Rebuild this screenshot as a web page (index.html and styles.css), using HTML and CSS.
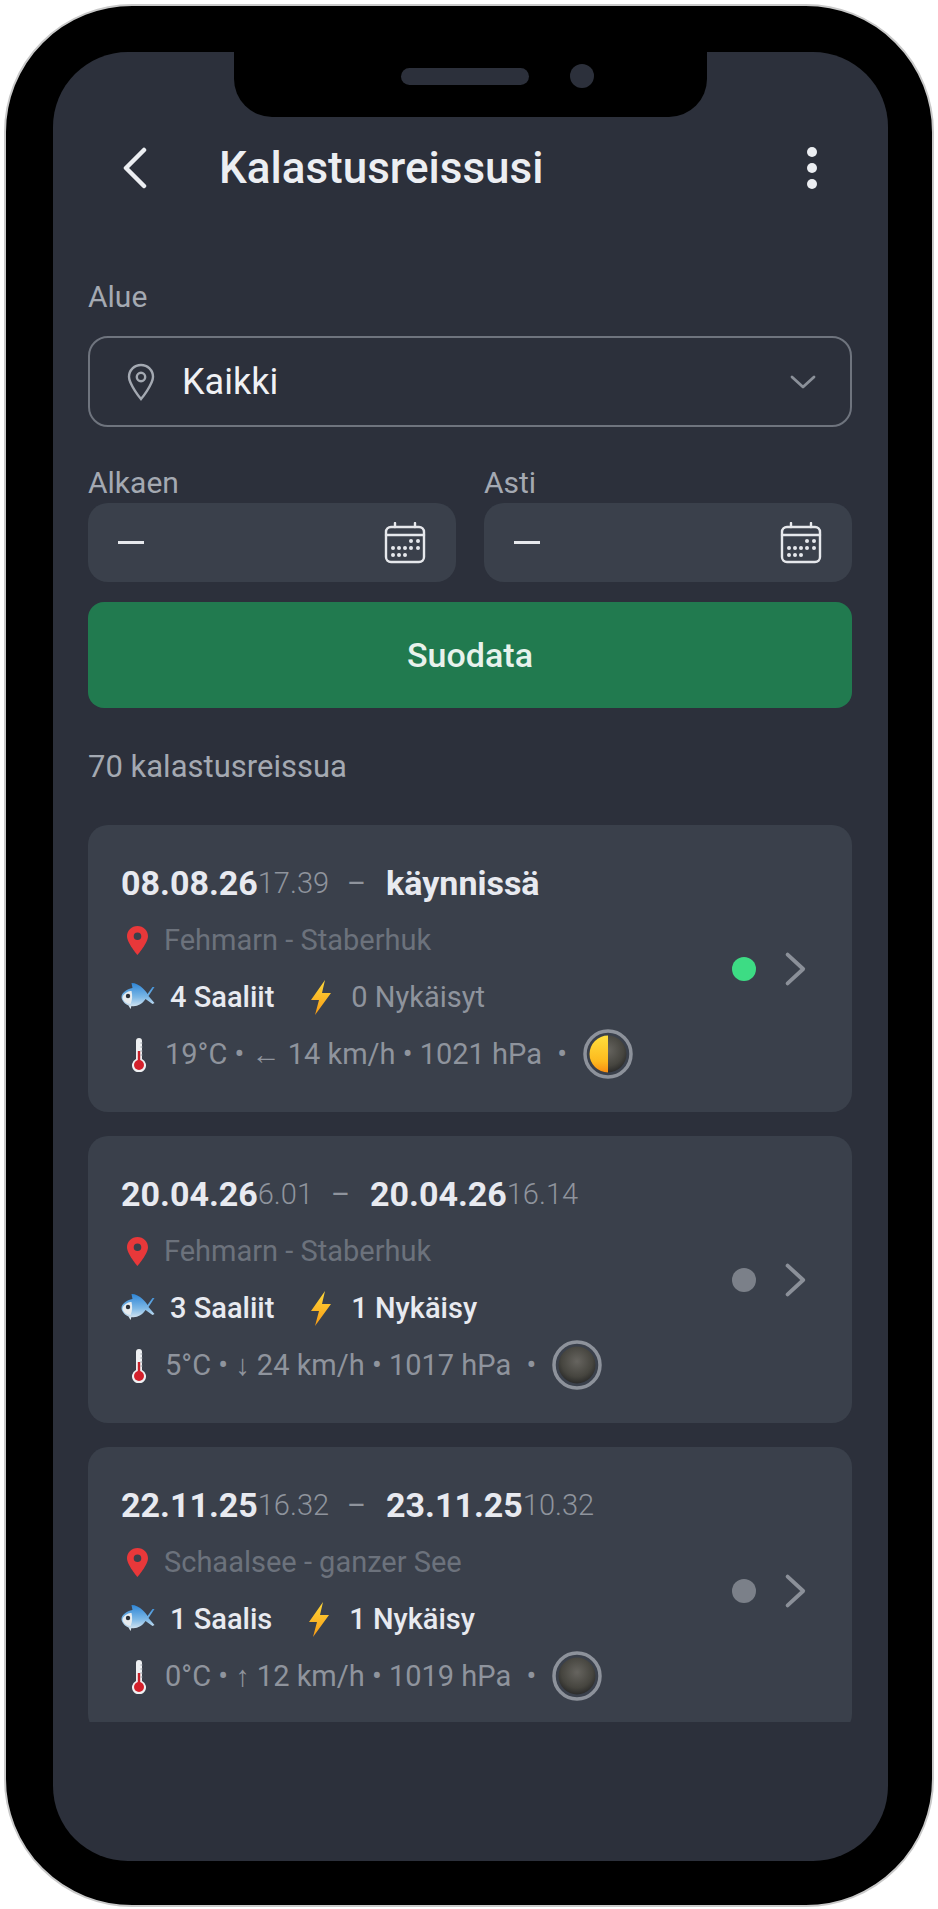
FILE: index.html
```html
<!DOCTYPE html>
<html lang="fi">
<head>
<meta charset="UTF-8">
<meta name="viewport" content="width=device-width, initial-scale=1.0">
<title>Kalastusreissusi</title>
<link rel="stylesheet" href="styles.css">
</head>
<body>

<svg class="icon-defs" aria-hidden="true">
    <defs>
        <linearGradient id="fishBody" x1="0" y1="0" x2="0" y2="1">
            <stop offset="0" stop-color="#2f86d6"/>
            <stop offset="0.55" stop-color="#7db8e6"/>
            <stop offset="1" stop-color="#e8eef2"/>
        </linearGradient>
        <linearGradient id="boltFill" x1="0" y1="0" x2="0" y2="1">
            <stop offset="0" stop-color="#ffd93b"/>
            <stop offset="1" stop-color="#f79a14"/>
        </linearGradient>
        <linearGradient id="moonLit" x1="0" y1="0" x2="0" y2="1">
            <stop offset="0" stop-color="#ffdf3d"/>
            <stop offset="0.7" stop-color="#fdb91e"/>
            <stop offset="1" stop-color="#f78d12"/>
        </linearGradient>
        <radialGradient id="moonDark" cx="0.5" cy="0.4" r="0.6">
            <stop offset="0" stop-color="#66645f"/>
            <stop offset="0.7" stop-color="#46453f"/>
            <stop offset="1" stop-color="#2b2b2a"/>
        </radialGradient>
        <symbol id="i-fish" viewBox="0 0 36 30">
            <path d="M33 5l-6 9 6 7-2 1-7-5c-3 5-9 8-14 7l-1 3-2-3.500C3 22 0 18 0 15c0-4 5-8 11-9l-1-5c4 0 8 2 11 5 2 2 4 4 5 6l5-7z" fill="url(#fishBody)"/>
            <path d="M1 15c2-5 7-6 9-6 1 4 1 9-1 13-4 0-8-3-8-7z" fill="#e6ebee"/>
            <circle cx="6.500" cy="14" r="2.200" fill="#2a3038"/>
        </symbol>
        <symbol id="i-bolt" viewBox="0 0 20 35">
            <path d="M14 0L0 20h8L4 35l16-22h-9z" fill="url(#boltFill)"/>
        </symbol>
        <symbol id="i-thermo" viewBox="0 0 14 35">
            <path d="M4 4a3 3 0 0 1 6 0v18a7 7 0 1 1-6 0z" fill="#eef0f2"/>
            <rect x="5.800" y="14" width="2.400" height="12" fill="#c9202a"/>
            <circle cx="7" cy="28" r="5" fill="#d3202b"/>
            <path d="M8.500 6h2M8.500 10h2M8.500 14h2M8.500 18h2" stroke="#9aa0a8" stroke-width="1"/>
        </symbol>
        <symbol id="i-pin-red" viewBox="0 0 21 29">
            <path fill-rule="evenodd" d="M10.500 0C4.700 0 0 4.600 0 10.300 0 17 10.500 29 10.500 29S21 17 21 10.300C21 4.600 16.300 0 10.500 0zm0 14a3.800 3.800 0 1 1 0-7.600 3.800 3.800 0 0 1 0 7.600z" fill="#e8383a"/>
        </symbol>
        <symbol id="i-chev" viewBox="0 0 20 30">
            <path d="M3 3l13 12L3 27" fill="none" stroke="#8b9099" stroke-width="3.200" stroke-linecap="round" stroke-linejoin="round"/>
        </symbol>
        <symbol id="i-cal" viewBox="0 0 42 42">
            <g fill="none" stroke="#e6e8ec" stroke-width="2.400" stroke-linecap="round">
                <rect x="2" y="5" width="38" height="35" rx="5"/>
                <path d="M2 13h38M11 1v4M31 1v4"/>
            </g>
            <g fill="#e6e8ec">
                <circle cx="27" cy="19" r="2"/><circle cx="34" cy="19" r="2"/>
                <circle cx="9" cy="26" r="2"/><circle cx="15" cy="26" r="2"/><circle cx="21" cy="26" r="2"/><circle cx="27" cy="26" r="2"/><circle cx="34" cy="26" r="2"/>
                <circle cx="9" cy="33" r="2"/><circle cx="15" cy="33" r="2"/><circle cx="21" cy="33" r="2"/>
            </g>
        </symbol>
        <symbol id="i-moon-half" viewBox="0 0 50 50">
            <circle cx="25" cy="25" r="23" fill="none" stroke="#8d929b" stroke-width="3.500"/>
            <circle cx="25" cy="25" r="18.500" fill="url(#moonDark)"/>
            <path d="M25 6.500a18.500 18.500 0 0 0 0 37z" fill="url(#moonLit)"/>
        </symbol>
        <symbol id="i-moon-new" viewBox="0 0 50 50">
            <circle cx="25" cy="25" r="23" fill="none" stroke="#8d929b" stroke-width="3.500"/>
            <circle cx="25" cy="25" r="18.500" fill="url(#moonDark)"/>
        </symbol>
    </defs>
</svg>

<div class="phone">
    <div class="notch">
        <span class="speaker"></span>
        <span class="camera"></span>
    </div>
    <div class="screen">
        <header class="topbar">
            <svg class="back" viewBox="0 0 26 42"><path d="M22 3L4 21l18 18" fill="none" stroke="#eceef2" stroke-width="4.500" stroke-linecap="round" stroke-linejoin="round"/></svg>
            <h1>Kalastusreissusi</h1>
            <div class="menu"><span></span><span></span><span></span></div>
        </header>

        <div class="filters">
            <div class="label">Alue</div>
            <div class="select">
                <svg class="select-pin" viewBox="0 0 28 38"><path d="M14 2C7.400 2 2 7.200 2 13.800 2 21.500 14 36 14 36s12-14.500 12-22.200C26 7.200 20.600 2 14 2z" fill="none" stroke="#a4a9b2" stroke-width="2.400"/><circle cx="14" cy="14" r="4.200" fill="none" stroke="#a4a9b2" stroke-width="2.400"/></svg>
                <span class="select-text">Kaikki</span>
                <svg class="select-chev" viewBox="0 0 26 14"><path d="M2 2l11 10L24 2" fill="none" stroke="#8b9099" stroke-width="2.800" stroke-linecap="round" stroke-linejoin="round"/></svg>
            </div>
            <div class="dates">
                <div class="date-col">
                    <div class="label">Alkaen</div>
                    <div class="date-field">
                        <span class="dash"></span>
                        <svg class="cal"><use href="#i-cal"/></svg>
                    </div>
                </div>
                <div class="date-col">
                    <div class="label">Asti</div>
                    <div class="date-field">
                        <span class="dash"></span>
                        <svg class="cal"><use href="#i-cal"/></svg>
                    </div>
                </div>
            </div>
            <button class="filter-btn" type="button">Suodata</button>
        </div>

        <div class="count">70 kalastusreissua</div>

        <div class="trips">
            <div class="card">
                <div class="card-body">
                    <div class="line when"><b>08.08.26</b> <span class="time">17.39</span><span class="sep">–</span><b>käynnissä</b></div>
                    <div class="line place"><svg class="pin"><use href="#i-pin-red"/></svg>Fehmarn - Staberhuk</div>
                    <div class="line stats">
                        <svg class="fish"><use href="#i-fish"/></svg><span class="on">4 Saaliit</span>
                        <svg class="bolt"><use href="#i-bolt"/></svg><span>0 Nykäisyt</span>
                    </div>
                    <div class="line weather">
                        <svg class="thermo"><use href="#i-thermo"/></svg>19°C • ← 14 km/h • 1021 hPa <span class="dot-sep">•</span>
                        <svg class="moon"><use href="#i-moon-half"/></svg>
                    </div>
                </div>
                <span class="status live"></span>
                <svg class="card-chev"><use href="#i-chev"/></svg>
            </div>

            <div class="card">
                <div class="card-body">
                    <div class="line when"><b>20.04.26</b> <span class="time">6.01</span><span class="sep">–</span><b>20.04.26</b> <span class="time">16.14</span></div>
                    <div class="line place"><svg class="pin"><use href="#i-pin-red"/></svg>Fehmarn - Staberhuk</div>
                    <div class="line stats">
                        <svg class="fish"><use href="#i-fish"/></svg><span class="on">3 Saaliit</span>
                        <svg class="bolt"><use href="#i-bolt"/></svg><span class="on">1 Nykäisy</span>
                    </div>
                    <div class="line weather">
                        <svg class="thermo"><use href="#i-thermo"/></svg>5°C • ↓ 24 km/h • 1017 hPa <span class="dot-sep">•</span>
                        <svg class="moon"><use href="#i-moon-new"/></svg>
                    </div>
                </div>
                <span class="status"></span>
                <svg class="card-chev"><use href="#i-chev"/></svg>
            </div>

            <div class="card">
                <div class="card-body">
                    <div class="line when"><b>22.11.25</b> <span class="time">16.32</span><span class="sep">–</span><b>23.11.25</b> <span class="time">10.32</span></div>
                    <div class="line place"><svg class="pin"><use href="#i-pin-red"/></svg>Schaalsee - ganzer See</div>
                    <div class="line stats">
                        <svg class="fish"><use href="#i-fish"/></svg><span class="on">1 Saalis</span>
                        <svg class="bolt"><use href="#i-bolt"/></svg><span class="on">1 Nykäisy</span>
                    </div>
                    <div class="line weather">
                        <svg class="thermo"><use href="#i-thermo"/></svg>0°C • ↑ 12 km/h • 1019 hPa <span class="dot-sep">•</span>
                        <svg class="moon"><use href="#i-moon-new"/></svg>
                    </div>
                </div>
                <span class="status"></span>
                <svg class="card-chev"><use href="#i-chev"/></svg>
            </div>
        </div>
    </div>
</div>

</body>
</html>
```

FILE: styles.css
```css
body {
    font-family: Roboto, "Liberation Sans", sans-serif;
    margin: 0;
    padding: 0;
    background-color: #fff;
}
.icon-defs {
    position: absolute;
    width: 0;
    height: 0;
}
.phone {
    position: relative;
    box-sizing: border-box;
    width: 930px;
    height: 1903px;
    margin: 4px 0 0 4px;
    padding: 46px 44px 44px 47px;
    background-color: #000;
    border: 2px solid #c9c9c9;
    border-radius: 128px;
}
.notch {
    position: absolute;
    top: 46px;
    left: 228px;
    width: 473px;
    height: 65px;
    background-color: #000;
    border-radius: 0 0 38px 38px;
}
.speaker {
    position: absolute;
    top: 16px;
    left: 167px;
    width: 128px;
    height: 17px;
    background-color: #2c303b;
    border-radius: 9px;
}
.camera {
    position: absolute;
    top: 12px;
    left: 336px;
    width: 24px;
    height: 24px;
    background-color: #2c303b;
    border-radius: 50%;
}
.screen {
    display: flex;
    flex-direction: column;
    box-sizing: border-box;
    height: 100%;
    padding: 0 36px 139px 35px;
    background-color: #2c303b;
    border-radius: 75px;
    overflow: hidden;
}
.topbar {
    display: flex;
    align-items: center;
    flex: none;
    height: 100px;
    margin-top: 66px;
}
.back {
    width: 26px;
    height: 42px;
    margin-left: 34px;
}
.topbar h1 {
    margin: 0 0 0 71px;
    font-size: 44px;
    font-weight: 500;
    color: #eceef2;
}
.menu {
    display: flex;
    flex-direction: column;
    gap: 6px;
    margin-left: auto;
    margin-right: 35px;
}
.menu span {
    width: 10px;
    height: 10px;
    background-color: #eceef2;
    border-radius: 50%;
}
.filters {
    flex: none;
    margin-top: 61px;
}
.label {
    font-size: 30px;
    line-height: 36px;
    color: #a4a9b2;
}
.select {
    display: flex;
    align-items: center;
    box-sizing: border-box;
    height: 91px;
    margin-top: 21px;
    padding: 0 34px 0 37px;
    border: 2px solid #6f747e;
    border-radius: 20px;
}
.select-pin {
    width: 28px;
    height: 38px;
}
.select-text {
    margin-left: 27px;
    font-size: 36px;
    color: #f0f1f4;
}
.select-chev {
    width: 26px;
    height: 14px;
    margin-left: auto;
}
.dates {
    display: flex;
    gap: 28px;
    margin-top: 38px;
}
.date-col {
    flex: 1;
}
.date-field {
    display: flex;
    align-items: center;
    justify-content: space-between;
    height: 79px;
    margin-top: 2px;
    padding: 0 30px;
    background-color: #3a404b;
    border-radius: 20px;
}
.dash {
    width: 26px;
    height: 3px;
    background-color: #e6e8ec;
}
.cal {
    width: 42px;
    height: 42px;
}
.filter-btn {
    display: block;
    width: 100%;
    height: 106px;
    margin-top: 20px;
    font-family: inherit;
    font-size: 34px;
    font-weight: 500;
    color: #e8f2ec;
    background-color: #217a4f;
    border: none;
    border-radius: 16px;
}
.count {
    flex: none;
    margin-top: 41px;
    font-size: 31px;
    line-height: 36px;
    color: #a4a9b2;
}
.trips {
    flex: 1;
    min-height: 0;
    margin-top: 40px;
    overflow: hidden;
}
.card {
    display: flex;
    align-items: center;
    box-sizing: border-box;
    height: 287px;
    margin-bottom: 24px;
    padding: 0 44px 0 33px;
    background-color: #3a404b;
    border-radius: 20px;
}
.card-body {
    flex: 1;
}
.line {
    display: flex;
    align-items: center;
    height: 57px;
    font-size: 29px;
    white-space: pre;
}
.when b {
    font-size: 34px;
    font-weight: 700;
    color: #e8eaf0;
}
.time {
    color: #8f949d;
    font-weight: 300;
}
.sep {
    margin: 0 20px 0 18px;
    color: #8f949d;
}
.place {
    color: #6c727c;
}
.pin {
    width: 21px;
    height: 29px;
    margin: 0 16px 0 6px;
}
.stats {
    color: #8f949d;
}
.stats .on {
    font-weight: 500;
    color: #e8eaf0;
}
.fish {
    width: 37px;
    height: 30px;
    margin-right: 12px;
}
.bolt {
    width: 20px;
    height: 35px;
    margin: 0 20px 0 37px;
}
.weather {
    color: #8f949d;
}
.thermo {
    width: 14px;
    height: 35px;
    margin: 0 19px 0 11px;
}
.dot-sep {
    margin-left: 8px;
}
.moon {
    width: 50px;
    height: 50px;
    margin-left: 16px;
}
.status {
    flex: none;
    width: 24px;
    height: 24px;
    background-color: #7b8089;
    border-radius: 50%;
}
.status.live {
    background-color: #3ddc84;
}
.card-chev {
    flex: none;
    width: 24px;
    height: 36px;
    margin-left: 28px;
}
```
